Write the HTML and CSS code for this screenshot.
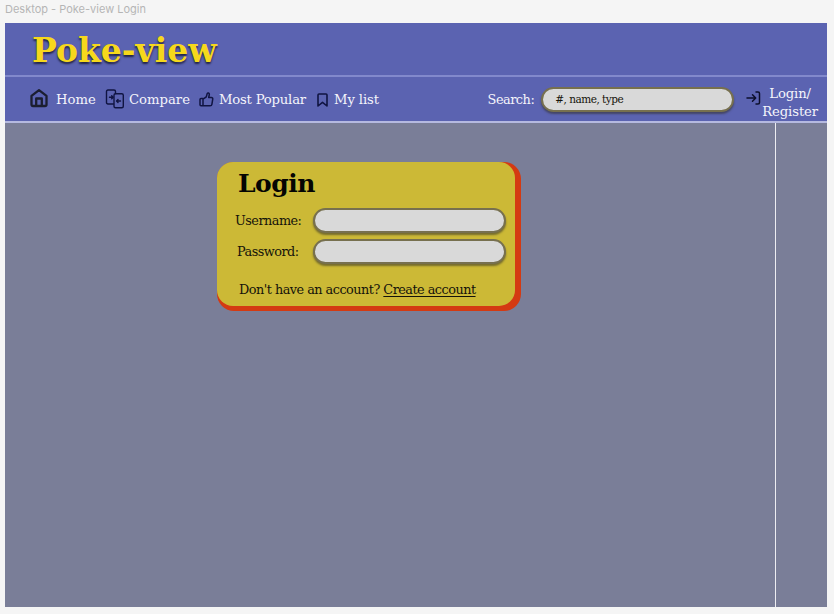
FILE: index.html
```html
<!DOCTYPE html>
<html lang="en">
<head>
<meta charset="utf-8">
<title>Poke-view Login</title>
<link rel="stylesheet" href="styles.css">
</head>
<body>
<div class="frame-label">Desktop - Poke-view Login</div>
<div class="frame">
  <header class="brand"><h1>Poke-view</h1></header>
  <nav class="nav">
    <a class="item home">
      <svg width="18" height="20" viewBox="0 0 18 20" fill="none" stroke="#1b1e30" stroke-width="2.3" stroke-linejoin="round"><path d="M1.500 6.800 9 1.200l7.500 5.600V15.500q0 1.500-1.500 1.500H3q-1.500 0-1.500-1.500zM6.200 17V9.500h5.600V17"/></svg>
      <span>Home</span>
    </a>
    <a class="item compare">
      <svg width="20" height="21" viewBox="0 0 20 21" fill="none" stroke="#101442" stroke-width="1.400" stroke-linecap="round" stroke-linejoin="round"><path d="M8.500 15H3q-1.500 0-1.500-1.500V2.500Q1.500 1 3 1h6q1.500 0 1.500 1.500V4.500"/><rect x="9" y="4.700" width="9.300" height="14" rx="1.500"/><path d="M4.500 8.200h3.500M6.700 6.700 8.200 8.200 6.700 9.700M15.500 12h-3.500M13 10.500l-1.500 1.500 1.500 1.500"/></svg>
      <span>Compare</span>
    </a>
    <a class="item popular">
      <svg width="15" height="15" viewBox="0 0 15 15" fill="none" stroke="#101442" stroke-width="1.500" stroke-linejoin="round"><path d="M4 7.200 7.300 4.800 8.200 1.600Q8.600.8 9.500 1q1 .3.800 1.600L9.700 5.500h2.600q1.700 0 1.400 1.800l-.8 5q-.2 1.500-1.800 1.500H4zM4 6.500H2Q1 6.500 1 7.500v5.300q0 1 1 1h2z"/></svg>
      <span>Most Popular</span>
    </a>
    <a class="item list">
      <svg width="11" height="15" viewBox="0 0 11 15" fill="none" stroke="#101442" stroke-width="1.600" stroke-linejoin="round"><path d="M1 3q0-1 1-1h7q1 0 1 1v11L5.500 10.300 1 14z"/></svg>
      <span>My list</span>
    </a>
    <label class="search"><span>Search:</span><span class="field search-field">#, name, type</span></label>
    <a class="item login">
      <svg width="15" height="14" viewBox="0 0 15 14" fill="none" stroke="#0c0f2c" stroke-width="1.500" stroke-linecap="round" stroke-linejoin="round"><path d="M1 7h8.500M6.500 3.800 9.700 7l-3.200 3.200M10 1h2q1.500 0 1.500 1.500v9Q13.500 13 12 13h-2"/></svg>
      <span>Login/<br>Register</span>
    </a>
  </nav>
  <main class="content">
    <section class="main-col">
      <div class="card-edge">
        <form class="card">
          <h2>Login</h2>
          <div class="row"><span class="username">Username:</span><span class="field"></span></div>
          <div class="row"><span class="password">Password:</span><span class="field"></span></div>
          <p>Don't have an account? <a>Create account</a></p>
        </form>
      </div>
    </section>
    <aside class="side-col"></aside>
  </main>
</div>
</body>
</html>
```
FILE: styles.css
```css
* { box-sizing: border-box; }
body {
  margin: 0;
  height: 614px;
  overflow: hidden;
  padding: 0 7px 7px 5px;
  background: #f5f5f5;
  font-family: "DejaVu Serif", serif;
  font-size: 13.2px;
  color: #15130a;
}
h1, h2, p { margin: 0; }
span, p, h1, h2 { white-space: nowrap; }
svg { display: block; flex: none; }
.frame-label {
  height: 23px;
  line-height: 19px;
  font-family: Inter, sans-serif;
  font-size: 11px;
  color: #b5b5b5;
}
.frame {
  height: 584px;
  display: flex;
  flex-direction: column;
  background: #7a7e98;
}
.brand {
  height: 54px;
  padding-left: 27px;
  background: #5b63b1;
  border-bottom: 2px solid #8289cc;
}
.brand h1 {
  font-size: 33px;
  line-height: 55px;
  color: #f6d81c;
  text-shadow: 0 2px 2px rgba(20, 20, 40, 0.8);
}
.nav {
  height: 46px;
  display: flex;
  align-items: center;
  padding: 0 9px 0 25px;
  background: #5b63b1;
  border-bottom: 2px solid #b5b9e0;
  color: #f4f4fb;
}
.item { display: flex; align-items: center; }
.home { width: 75px; gap: 8px; }
.compare { width: 94px; gap: 4px; }
.popular { width: 118px; gap: 5px; letter-spacing: -0.2px; }
.list { gap: 6px; letter-spacing: -0.1px; }
.search {
  margin-left: auto;
  display: flex;
  align-items: center;
  gap: 7px;
  font-size: 12.9px;
  letter-spacing: -0.5px;
}
.field {
  width: 193px;
  height: 25px;
  border: 2px solid #77704f;
  border-radius: 13px;
  background: #d9d9d9;
  box-shadow: 0 2px 2px rgba(50, 45, 40, 0.55);
}
.search-field {
  padding-left: 12px;
  font-size: 10.500px;
  line-height: 20px;
  color: #15130a;
}
.login { margin-left: 12px; gap: 1px; text-align: center; line-height: 18px; }
.login svg { margin-top: -2px; }
.login span { padding-top: 7px; letter-spacing: -0.1px; }
.content { flex: 1; display: flex; }
.main-col { width: 770px; padding: 39px 0 0 212px; }
.side-col { flex: 1; border-left: 1px solid #ededf2; }
.card-edge {
  width: 304px;
  height: 149px;
  padding: 0 6px 5px 0;
  border-radius: 17px;
  background: #d43a12;
}
.card {
  height: 144px;
  padding: 6px 9px 0 18px;
  border-radius: 16px;
  background: #ccb936;
  font-size: 12.8px;
  letter-spacing: -0.5px;
}
.card h2 {
  padding-left: 3px;
  font-size: 25px;
  line-height: 32px;
  color: #050503;
}
.row {
  height: 31px;
  display: flex;
  align-items: center;
  justify-content: space-between;
}
.row:first-of-type { margin-top: 5px; }
.password { padding-left: 2px; }
.card p { padding: 14px 0 0 4px; line-height: 18px; }
.card p a { text-decoration: underline; text-underline-offset: 2px; text-decoration-thickness: 1px; }
```
